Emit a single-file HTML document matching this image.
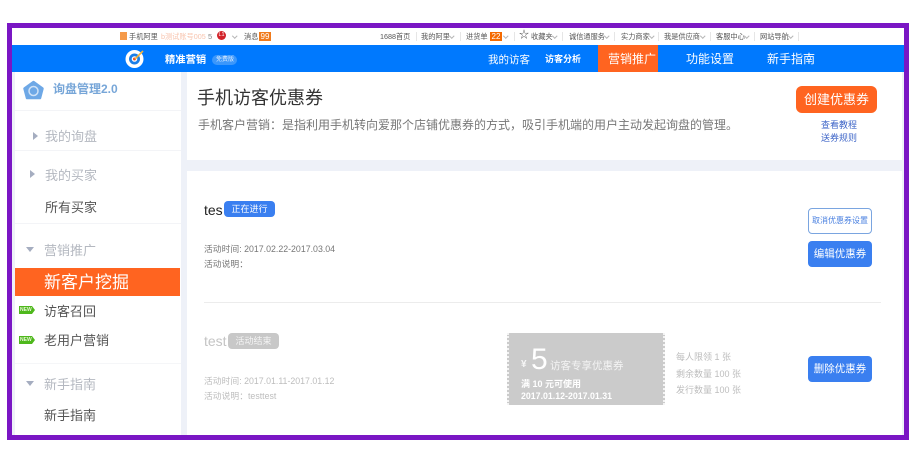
<!DOCTYPE html>
<html lang="zh"><head><meta charset="utf-8">
<style>
html,body{margin:0;padding:0;background:#fff}
body{width:922px;height:476px;position:relative;overflow:hidden;font-family:"Liberation Sans","Noto Sans CJK SC",sans-serif}
#p{position:absolute;left:0;top:0;width:922px;height:476px;filter:blur(.35px)}
.a{position:absolute;white-space:nowrap;line-height:1}
.r{position:absolute}
.t{font-size:7.2px;color:#555}
.w{color:#fff}
.s{font-size:13px;color:#b4b8c0}
.d{font-size:13px;color:#555}
.g{font-size:8.800px;color:#777}
.l{font-size:9px;color:#bdbdbd}
.btn{position:absolute;background:#3a7ff0;border-radius:4px;color:#fff;font-size:10.500px;text-align:center;line-height:26px;width:64px;height:26px;left:808px}
.tri{position:absolute;width:0;height:0}
.c{position:absolute;top:34px;width:2.500px;height:2.500px;border-right:1px solid #b5b5b5;border-bottom:1px solid #b5b5b5;transform:rotate(45deg)}
.v{position:absolute;top:32px;width:1px;height:9px;background:#e6e6e6}
.new{position:absolute;left:20px;font-size:5px;color:#e8f5d8;font-weight:bold;line-height:1;white-space:nowrap}
</style></head><body><div id="p">
<div class="r" style="left:7px;top:23px;width:892px;height:407px;border:5px solid #7a16c4"></div>
<div class="r" style="left:12px;top:28px;width:892px;height:407px;background:#eef1f8;overflow:hidden"></div>
<div class="r" style="left:12px;top:28px;width:892px;height:17px;background:#fff"></div>
<div class="r" style="left:12px;top:45px;width:892px;height:27px;background:#0079fe"></div>
<div class="r" style="left:598px;top:45px;width:60px;height:27px;background:#ff6420"></div>
<div class="r" style="left:15px;top:72px;width:166px;height:363px;background:#fff"></div>
<div class="r" style="left:187px;top:72px;width:715px;height:88px;background:#fff"></div>
<div class="r" style="left:187px;top:171px;width:715px;height:264px;background:#fff"></div>

<div class="r" style="left:120px;top:32px;width:7px;height:8px;background:#f59a4a"></div>
<div class="a t" style="left:129px;top:33px">手机阿里</div>
<div class="a" style="left:161px;top:33px;font-size:7.200px;color:#f8c4ae">b测试账号005</div>
<div class="a" style="left:208px;top:33px;font-size:7.500px;color:#888">5</div>
<div class="r" style="left:217px;top:31px;width:9px;height:9px;border-radius:50%;background:#d2232a"></div>
<div class="a" style="left:218.500px;top:33px;font-size:5.500px;color:#fff">L1</div>
<div class="c" style="left:233px"></div>
<div class="a t" style="left:244px;top:33px">消息</div>
<div class="r" style="left:259px;top:32px;width:12px;height:9px;background:#f07a1c"></div>
<div class="a" style="left:260.500px;top:33px;font-size:8px;color:#fff">99</div>
<div class="a t" style="left:380px;top:33px">1688首页</div>
<div class="a t" style="left:421px;top:33px">我的阿里</div>
<div class="c" style="left:450px"></div>
<div class="a t" style="left:466px;top:33px">进货单</div>
<div class="r" style="left:490px;top:32px;width:12px;height:9px;background:#f56a00"></div>
<div class="a" style="left:491.500px;top:33px;font-size:8px;color:#fff">22</div>
<div class="c" style="left:504px"></div>
<div class="a" style="left:519px;top:31px;font-size:10px;color:#444">☆</div>
<div class="a t" style="left:531px;top:33px">收藏夹</div>
<div class="c" style="left:553px"></div>
<div class="a t" style="left:569px;top:33px">诚信通服务</div>
<div class="c" style="left:605px"></div>
<div class="a t" style="left:621px;top:33px">实力商家</div>
<div class="c" style="left:650px"></div>
<div class="a t" style="left:664px;top:33px">我是供应商</div>
<div class="c" style="left:701px"></div>
<div class="a t" style="left:716px;top:33px">客服中心</div>
<div class="c" style="left:745px"></div>
<div class="a t" style="left:760px;top:33px">网站导航</div>
<div class="c" style="left:789px"></div>
<div class="v" style="left:416px"></div>
<div class="v" style="left:460px"></div>
<div class="v" style="left:514px"></div>
<div class="v" style="left:562px"></div>
<div class="v" style="left:614px"></div>
<div class="v" style="left:658px"></div>
<div class="v" style="left:710px"></div>
<div class="v" style="left:754px"></div>
<div class="v" style="left:798px"></div>

<svg class="r" style="left:125px;top:48px" width="22" height="21" viewBox="0 0 22 21"><circle cx="9.500" cy="11" r="9" fill="#fff"/><circle cx="9.500" cy="11" r="5.500" fill="#1c7fe8"/><circle cx="9.500" cy="11" r="2.800" fill="#fff"/><circle cx="9.500" cy="11" r="1.500" fill="#e8502a"/><path d="M10 11L18 3" stroke="#f2b33c" stroke-width="1.600"/></svg>
<div class="a w" style="left:165px;top:56px;font-size:10.300px;font-weight:bold">精准营销</div>
<div class="r" style="left:212px;top:55px;width:25px;height:10px;border-radius:5px;background:#3b97fb"></div>
<div class="a" style="left:216px;top:57px;font-size:6px;color:#d5e9ff">免费版</div>
<div class="a w" style="left:488px;top:55px;font-size:10.500px">我的访客</div>
<div class="a w" style="left:545px;top:55px;font-size:9px;font-weight:bold">访客分析</div>
<div class="a w" style="left:608px;top:53px;font-size:12px">营销推广</div>
<div class="a w" style="left:686px;top:53px;font-size:12px">功能设置</div>
<div class="a w" style="left:767px;top:53px;font-size:12px">新手指南</div>

<svg class="r" style="left:23px;top:80px" width="21" height="22" viewBox="0 0 21 22"><path d="M10.500 2L19.500 8.500 17 18H4L1.500 8.500z" fill="#6ea8e6" stroke="#6ea8e6" stroke-width="2.500" stroke-linejoin="round"/><circle cx="10.500" cy="11" r="4.500" fill="none" stroke="#cfe2f7" stroke-width="1.500"/></svg>
<div class="a" style="left:53px;top:83px;font-size:12px;color:#77a6d8;font-weight:bold">询盘管理2.0</div>
<div class="r" style="left:15px;top:110px;width:166px;height:1px;background:#f3f4f7"></div>
<div class="tri" style="left:33px;top:132px;border-left:5px solid #a5adc0;border-top:4px solid transparent;border-bottom:4px solid transparent"></div>
<div class="a s" style="left:45px;top:130px">我的询盘</div>
<div class="r" style="left:15px;top:150px;width:166px;height:1px;background:#f3f4f7"></div>
<div class="tri" style="left:30px;top:170px;border-left:5px solid #a5adc0;border-top:4px solid transparent;border-bottom:4px solid transparent"></div>
<div class="a s" style="left:45px;top:169px">我的买家</div>
<div class="a d" style="left:45px;top:201px">所有买家</div>
<div class="r" style="left:15px;top:223px;width:166px;height:1px;background:#f3f4f7"></div>
<div class="tri" style="left:26px;top:247px;border-top:5px solid #a5adc0;border-left:4px solid transparent;border-right:4px solid transparent"></div>
<div class="a s" style="left:44px;top:244px">营销推广</div>
<div class="r" style="left:15px;top:268px;width:165px;height:28px;background:#ff6420"></div>
<div class="a w" style="left:44px;top:274px;font-size:17px">新客户挖掘</div>
<svg class="r" style="left:19px;top:305px" width="17" height="11" viewBox="0 0 17 11"><path d="M0 1h13l3 4-3 4H0z" fill="#4eb81c"/></svg>
<div class="new" style="top:307.500px">NEW</div>
<div class="a d" style="left:44px;top:305px">访客召回</div>
<svg class="r" style="left:19px;top:335px" width="17" height="11" viewBox="0 0 17 11"><path d="M0 1h13l3 4-3 4H0z" fill="#4eb81c"/></svg>
<div class="new" style="top:337.500px">NEW</div>
<div class="a d" style="left:44px;top:334px">老用户营销</div>
<div class="r" style="left:15px;top:363px;width:166px;height:1px;background:#f5f6f8"></div>
<div class="tri" style="left:26px;top:381px;border-top:5px solid #a5adc0;border-left:4px solid transparent;border-right:4px solid transparent"></div>
<div class="a s" style="left:44px;top:378px">新手指南</div>
<div class="a d" style="left:44px;top:409px">新手指南</div>

<div class="a" style="left:197px;top:89px;font-size:18px;color:#333">手机访客优惠券</div>
<div class="a" style="left:198px;top:119px;font-size:12px;color:#777">手机客户营销：是指利用手机转向爱那个店铺优惠券的方式，吸引手机端的用户主动发起询盘的管理。</div>
<div class="r" style="left:796px;top:86px;width:81px;height:27px;border-radius:6px;background:#ff6420;color:#fff;font-size:13px;line-height:27px;text-align:center">创建优惠券</div>
<div class="a" style="left:821px;top:121px;font-size:9px;color:#3f66c8">查看教程</div>
<div class="a" style="left:821px;top:134px;font-size:9px;color:#3f66c8">送券规则</div>

<div class="a" style="left:204px;top:203px;font-size:14px;color:#222">tes</div>
<div class="r" style="left:224px;top:201px;width:51px;height:16px;border-radius:4px;background:#3a7ff0;color:#fff;font-size:9px;line-height:16px;text-align:center">正在进行</div>
<div class="a g" style="left:204px;top:245px">活动时间: 2017.02.22-2017.03.04</div>
<div class="a g" style="left:204px;top:260px">活动说明：</div>
<div class="r" style="left:808px;top:208px;width:62px;height:24px;border:1px solid #7aa5e0;border-radius:4px;color:#4a80e0;font-size:8px;line-height:24px;text-align:center">取消优惠券设置</div>
<div class="btn" style="top:241px">编辑优惠券</div>
<div class="r" style="left:204px;top:302px;width:677px;height:1px;background:#ececec"></div>

<div class="a" style="left:204px;top:334px;font-size:14px;color:#c4c4c4">test</div>
<div class="r" style="left:228px;top:333px;width:51px;height:16px;border-radius:4px;background:#c8c8c8;color:#f4f4f4;font-size:9px;line-height:16px;text-align:center">活动结束</div>
<div class="a l" style="left:204px;top:377px;font-size:8.800px">活动时间: 2017.01.11-2017.01.12</div>
<div class="a l" style="left:204px;top:392px;font-size:8.800px">活动说明：testtest</div>

<div class="r" style="left:507px;top:333px;width:154px;height:72px;background:#cbcbcb;border-left:2px dotted #f4f4f4;border-right:2px dotted #f4f4f4"></div>
<div class="a" style="left:521px;top:360px;font-size:10px;color:#f6f6f6;font-weight:bold">¥</div>
<div class="a" style="left:531px;top:345px;font-size:30px;color:#fff">5</div>
<div class="a" style="left:550px;top:361px;font-size:10.500px;color:#f4f4f4">访客专享优惠券</div>
<div class="a" style="left:521px;top:380px;font-size:9px;color:#fff;font-weight:bold">满 10 元可使用</div>
<div class="a" style="left:521px;top:392px;font-size:8.800px;color:#fff;font-weight:bold">2017.01.12-2017.01.31</div>
<div class="a l" style="left:676px;top:353px">每人限领 1 张</div>
<div class="a l" style="left:676px;top:369.500px">剩余数量 100 张</div>
<div class="a l" style="left:676px;top:386px">发行数量 100 张</div>
<div class="btn" style="top:356px">删除优惠券</div>
</div></body></html>
